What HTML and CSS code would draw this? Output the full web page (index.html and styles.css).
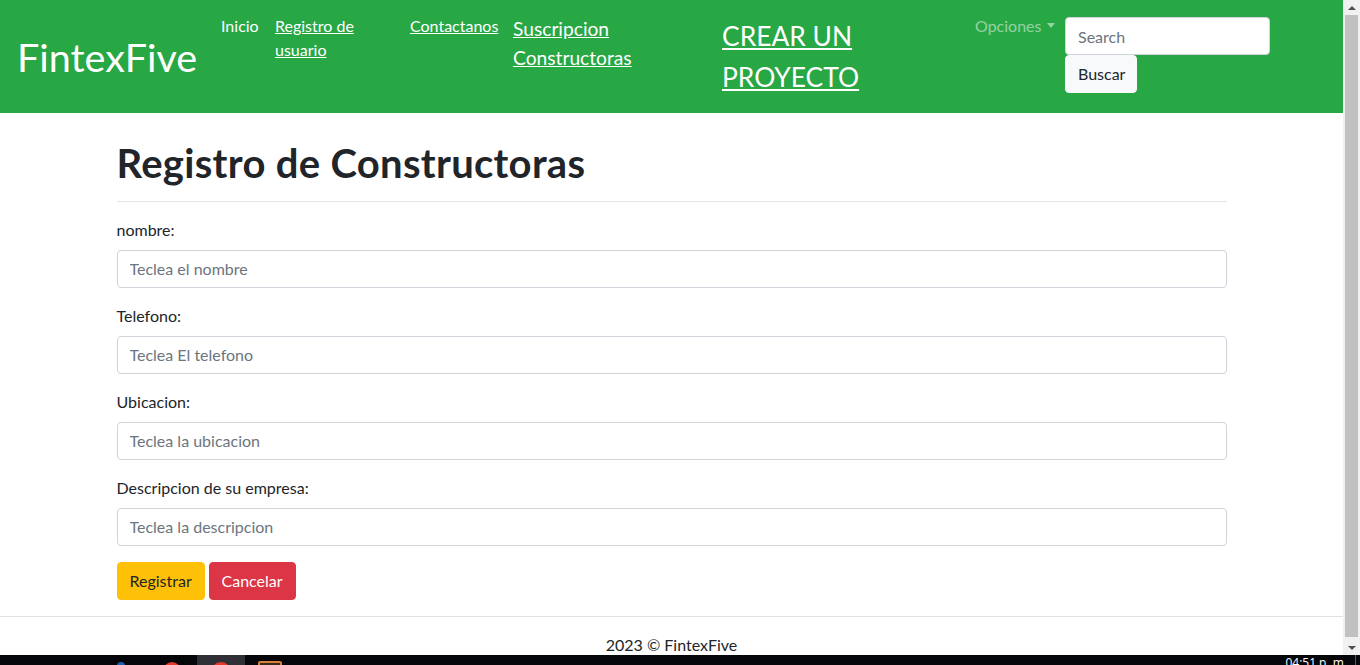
FILE: index.html
```html
<!DOCTYPE html>
<html lang="es">
<head>
<meta charset="utf-8">
<title>Registro de Constructoras</title>
<link rel="stylesheet" href="styles.css">
</head>
<body>
<div class="screen">
  <div class="viewport">
    <div class="page">
      <nav class="navbar">
        <a class="brand" href="#">FintexFive</a>
        <ul class="nav">
          <li class="nav-item w-inicio"><a class="nav-link plain" href="#">Inicio</a></li>
          <li class="nav-item w-registro"><a class="nav-link" href="#">Registro de usuario</a></li>
          <li class="nav-item w-contact"><a class="nav-link" href="#">Contactanos</a></li>
          <li class="nav-item w-susc"><a class="nav-link nav-link-md" href="#">Suscripcion Constructoras</a></li>
          <li class="nav-item w-crear"><a class="nav-link nav-link-lg" href="#">CREAR UN PROYECTO</a></li>
          <li class="nav-item w-opciones"><a class="nav-link plain muted dropdown-toggle" href="#">Opciones</a></li>
        </ul>
        <form class="search">
          <input class="search-input" type="search" placeholder="Search">
          <button class="btn btn-light" type="button">Buscar</button>
        </form>
      </nav>

      <main class="container">
        <h1 class="title">Registro de Constructoras</h1>
        <hr class="divider">
        <form class="reg-form">
          <div class="form-group">
            <label class="label">nombre:</label>
            <input class="form-control" type="text" placeholder="Teclea el nombre">
          </div>
          <div class="form-group">
            <label class="label">Telefono:</label>
            <input class="form-control" type="text" placeholder="Teclea El telefono">
          </div>
          <div class="form-group">
            <label class="label">Ubicacion:</label>
            <input class="form-control" type="text" placeholder="Teclea la ubicacion">
          </div>
          <div class="form-group">
            <label class="label">Descripcion de su empresa:</label>
            <input class="form-control" type="text" placeholder="Teclea la descripcion">
          </div>
          <div class="actions">
            <button class="btn btn-warning" type="button">Registrar</button>
            <button class="btn btn-danger" type="button">Cancelar</button>
          </div>
        </form>
      </main>

      <footer class="footer">2023 © FintexFive</footer>
    </div>
    <div class="scrollbar">
      <div class="sb-arrow"><span class="tri-up"></span></div>
      <div class="sb-track"><div class="sb-thumb"></div></div>
      <div class="sb-arrow"><span class="tri-down"></span></div>
    </div>
  </div>
  <div class="taskbar">
    <span class="tb-icon tb-blue"></span>
    <span class="tb-icon tb-red"></span>
    <span class="tb-active"><span class="tb-icon tb-red2"></span></span>
    <span class="tb-icon tb-orange"></span>
    <span class="tb-spacer"></span>
    <span class="tb-clock">04:51 p. m.</span>
    <span class="tb-edge"></span>
  </div>
</div>
</body>
</html>
```

FILE: styles.css
```css
* { box-sizing: border-box; }

html, body {
  margin: 0;
  padding: 0;
  height: 665px;
  overflow: hidden;
}

body {
  font-family: Lato, "Open Sans", "Liberation Sans", sans-serif;
  font-size: 16px;
  line-height: 1.5;
  color: #212529;
  background: #ffffff;
}

.screen {
  display: flex;
  flex-direction: column;
  width: 1360px;
  height: 665px;
}

.viewport {
  display: flex;
  flex-direction: row;
  height: 655px;
  flex: none;
}

.page {
  flex: 1;
  height: 655px;
  overflow: hidden;
  background: #ffffff;
}

/* ---------- navbar ---------- */
.navbar {
  display: flex;
  align-items: center;
  background: #28a745;
  padding: 8px 16px;
  height: 113px;
}

.brand {
  flex: none;
  width: 197px;
  padding-left: 1px;
  font-size: 39.5px;
  line-height: 1.5;
  color: #ffffff;
  text-decoration: none;
  white-space: nowrap;
}

.nav {
  display: flex;
  align-self: flex-start;
  list-style: none;
  margin: 0;
  padding: 0;
}

.nav-item { flex: none; }
.w-inicio { width: 54px; }
.w-registro { width: 135px; }
.w-contact { width: 103px; }
.w-susc { width: 209px; }
.w-crear { width: 253px; }
.w-opciones { width: 98px; }

.nav-link {
  display: block;
  padding: 6px 8px 10px;
  color: #ffffff;
  text-decoration: underline;
  font-size: 16px;
  line-height: 24px;
}

.nav-link.plain { text-decoration: none; }
.nav-link.muted { color: rgba(255, 255, 255, 0.5); }

.nav-link-md {
  padding-top: 7px;
  font-size: 19.2px;
  line-height: 28.8px;
}

.nav-link-lg {
  padding-top: 8px;
  font-size: 26.4px;
  line-height: 40.8px;
}

.dropdown-toggle { white-space: nowrap; }
.dropdown-toggle::after {
  content: "";
  display: inline-block;
  margin-left: 6px;
  vertical-align: 4px;
  border-top: 5px solid;
  border-right: 4.5px solid transparent;
  border-left: 4.5px solid transparent;
  border-bottom: 0;
}

.search {
  align-self: flex-start;
  margin-top: 9px;
  width: 205px;
  display: flex;
  flex-direction: column;
  align-items: flex-start;
}

.search-input {
  width: 205px;
  height: 38px;
  padding: 6px 12px;
  font-family: inherit;
  font-size: 16px;
  color: #495057;
  background: #ffffff;
  border: 1px solid #ced4da;
  border-radius: 4px;
  outline: none;
}

.search-input::placeholder,
.form-control::placeholder { color: #6c757d; opacity: 1; }

/* ---------- buttons ---------- */
.btn {
  display: inline-block;
  height: 38px;
  padding: 6px 12px;
  font-family: inherit;
  font-size: 16px;
  line-height: 24px;
  border: 1px solid transparent;
  border-radius: 4px;
  cursor: pointer;
}

.btn-light {
  width: 72px;
  background: #f8f9fa;
  border-color: #f8f9fa;
  color: #212529;
}

.btn-warning {
  width: 88px;
  background: #ffc107;
  border-color: #ffc107;
  color: #212529;
}

.btn-danger {
  width: 87px;
  background: #dc3545;
  border-color: #dc3545;
  color: #ffffff;
}

/* ---------- content ---------- */
.container {
  width: 1110px;
  margin: 0 auto;
  padding-top: 26px;
}

.title {
  margin: 0 0 6px;
  font-size: 40px;
  font-weight: 700;
  line-height: 48px;
  letter-spacing: 0.3px;
  color: #212529;
}

.divider {
  margin: 14px 0 16px;
  border: 0;
  border-top: 1px solid rgba(0, 0, 0, 0.1);
}

.reg-form { margin: 0 0 16px; }

.form-group { margin-bottom: 16px; }

.label {
  display: block;
  margin-bottom: 8px;
  line-height: 24px;
}

.form-control {
  display: block;
  width: 100%;
  height: 38px;
  padding: 5px 12px 7px;
  font-family: inherit;
  font-size: 16px;
  color: #495057;
  background: #ffffff;
  border: 1px solid #ced4da;
  border-radius: 4px;
  outline: none;
}

.actions {
  display: flex;
  gap: 4px;
}

.footer {
  border-top: 1px solid #dee2e6;
  padding: 16px 0;
  text-align: center;
  line-height: 24px;
}

/* ---------- scrollbar ---------- */
.scrollbar {
  flex: none;
  width: 17px;
  height: 655px;
  background: #f1f1f1;
  display: flex;
  flex-direction: column;
}

.sb-arrow {
  flex: none;
  height: 15px;
  display: flex;
  align-items: center;
  justify-content: center;
}

.sb-track {
  flex: 1;
  padding: 0 2px;
  display: flex;
  flex-direction: column;
}

.sb-thumb {
  flex: 1;
  margin-bottom: 3px;
  background: #c1c1c1;
}

.tri-up, .tri-down {
  width: 0;
  height: 0;
  border-left: 4px solid transparent;
  border-right: 4px solid transparent;
}
.tri-up { border-bottom: 4px solid #505050; }
.tri-down { border-top: 4px solid #505050; }

/* ---------- taskbar ---------- */
.taskbar {
  flex: none;
  height: 10px;
  background: #04060a;
  display: flex;
  align-items: flex-start;
  overflow: hidden;
}

.tb-icon {
  flex: none;
  display: block;
  margin-top: 7px;
}

.tb-blue {
  width: 8px;
  height: 10px;
  margin-left: 117px;
  background: #1f5fb0;
  border-radius: 4px 4px 0 0;
}

.tb-red {
  width: 18px;
  height: 18px;
  margin-left: 38px;
  margin-top: 7px;
  background: #e33b2e;
  border-radius: 50%;
}

.tb-active {
  flex: none;
  display: flex;
  justify-content: center;
  width: 48px;
  height: 10px;
  margin-left: 16px;
  background: #2e3035;
}

.tb-red2 {
  width: 20px;
  height: 20px;
  margin-top: 7px;
  background: #e53a2c;
  border-radius: 50%;
}

.tb-orange {
  width: 24px;
  height: 20px;
  margin-left: 13px;
  margin-top: 6px;
  border: 2px solid #d9813a;
  border-radius: 2px;
  background: #3a2a1c;
}

.tb-spacer { flex: 1; }

.tb-clock {
  flex: none;
  margin-top: 1px;
  margin-right: 8px;
  font-family: "Open Sans", "Liberation Sans", sans-serif;
  font-size: 12px;
  line-height: 14px;
  color: #ffffff;
}

.tb-edge {
  flex: none;
  width: 1px;
  height: 10px;
  margin-right: 4px;
  background: #555a60;
}
```
